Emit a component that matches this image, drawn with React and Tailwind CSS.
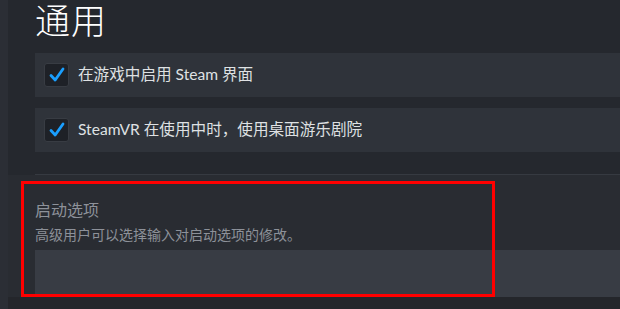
import React from 'react';

const rows = [
  { label: '在游戏中启用 Steam 界面', checked: true },
  { label: 'SteamVR 在使用中时，使用桌面游乐剧院', checked: true },
];

function Check() {
  return (
    <div className="w-[25px] h-[24px] shrink-0 rounded-[3px] bg-[#1e2127] border border-[#383c43] flex items-center justify-center">
      <svg width="18" height="18" viewBox="0 0 18 18" fill="none">
        <path d="M3 9.5 L7.2 14 L15 3" stroke="#1a9fff" strokeWidth="2.8" strokeLinecap="round" strokeLinejoin="round" />
      </svg>
    </div>
  );
}

export default function App() {
  return (
    <div
      className="relative w-[620px] h-[309px] overflow-hidden flex bg-[#25282e] text-[#dcdedf]"
      style={{ fontFamily: 'Lato, "Noto Sans CJK SC", sans-serif' }}
    >
      {/* left edge strip */}
      <div className="w-[8px] shrink-0 bg-[#2b2e35]" />

      <div className="flex-1 flex flex-col pl-[27px]">
        <h1 className="text-[35px] leading-[40px] font-light text-white tracking-[1px]">通用</h1>

        <div className="mt-[13px] flex flex-col gap-[11px]">
          {rows.map((r) => (
            <div key={r.label} className="h-[44px] bg-[#2f333a] flex items-center gap-[9px] pl-[9px]">
              <Check />
              <span className="text-[15.6px] text-[#dfe1e3]">{r.label}</span>
            </div>
          ))}
        </div>

        <div className="mt-[22px] h-px bg-[#363a41]" />

        <div className="flex-1 flex flex-col bg-[#292c32] -ml-[27px] pl-[27px]">
          <div className="mt-[24px] text-[16px] leading-[22px] text-[#8d9199]">启动选项</div>
          <div className="mt-[4px] text-[14px] leading-[20px] text-[#8d9199]">高级用户可以选择输入对启动选项的修改。</div>
          <div className="mt-[5px] h-[47px] bg-[#383c44]" />
          <div className="flex-1 bg-[#24262b] -ml-[27px]" />
        </div>
      </div>

      {/* red annotation frame */}
      <div className="absolute left-[21px] top-[181px] w-[474px] h-[116px] border-[3px] border-[#ff0000] pointer-events-none" />
    </div>
  );
}
